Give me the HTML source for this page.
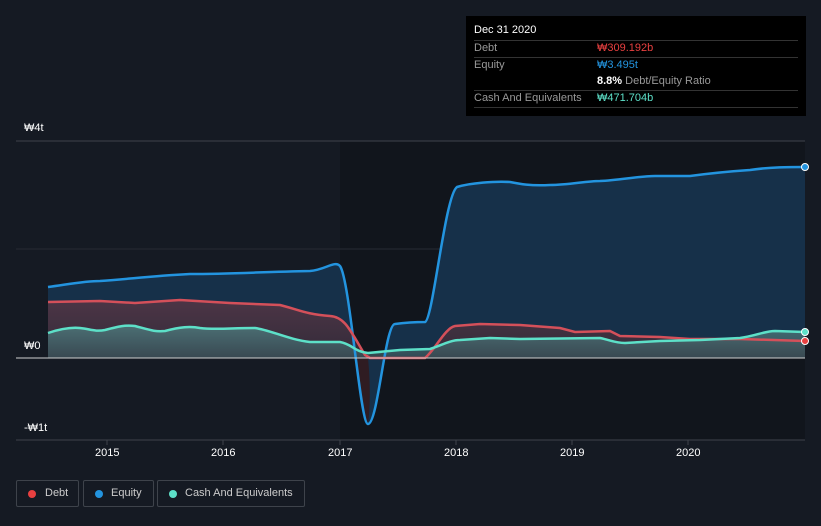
<!DOCTYPE html>
<html><head><style>
body{margin:0;width:821px;height:526px;background:#151a23;font-family:"Liberation Sans",sans-serif;overflow:hidden;position:relative}
.t{position:absolute;font-size:11px;color:#fff}
</style></head><body>
<svg width="821" height="526" style="position:absolute;left:0;top:0">
<defs>
<linearGradient id="gd" x1="0" y1="0" x2="0" y2="1"><stop offset="0" stop-color="#5a3645" stop-opacity=".8"/><stop offset="1" stop-color="#3a2a35" stop-opacity=".8"/></linearGradient>
<linearGradient id="gc" x1="0" y1="0" x2="0" y2="1"><stop offset="0" stop-color="#4e7e80" stop-opacity=".8"/><stop offset="1" stop-color="#3a5058" stop-opacity=".8"/></linearGradient>
</defs>
<rect x="340" y="141" width="465" height="299" fill="#11151c"/>
<line x1="16" y1="141" x2="805" y2="141" stroke="#3e434b"/>
<line x1="16" y1="249" x2="805" y2="249" stroke="#262b33"/>
<path d="M48,287 C70,284 85,281 100,281 C130,279 150,276 190,274 C230,274 260,272 310,271 C325,270 335,260 340,266 C350,280 360,424 368,424 C378,424 385,324 395,324 C410,322 420,322 425,322 C433,320 445,195 457,187 C470,183 495,181 510,182 C520,184 530,186 550,185 C570,185 585,181 600,181 C620,180 640,176 655,176 L690,176 C705,174 720,172 750,170 C770,167 790,167 805,167 L805,358 L48,358 Z" fill="#163049"/>
<path d="M48,302 L100,301 L135,303 L180,300 L230,303 L280,305 C300,310 305,314 330,316 C345,317 350,330 365,355 L370,358 L425,358 C435,350 445,328 455,326 L480,324 L520,325 L560,328 L575,332 L610,331 L620,336 L660,337 L690,339 L740,339 L805,341 L805,358 L48,358 Z" fill="url(#gd)"/>
<path d="M368,358 C372,400 368,424 368,424 C364,424 360,380 356,358 Z" fill="#2f1c22"/>
<path d="M48,333 C60,329 70,327 80,328 C90,329 95,332 105,330 C120,326 125,325 135,326 C150,330 155,332 165,331 C180,327 190,326 200,328 C215,330 230,328 255,328 C270,330 290,340 310,342 L340,342 C352,344 355,352 368,353 L400,350 L430,349 C440,346 450,340 460,340 L490,338 L520,339 L600,338 C610,340 615,343 625,343 L660,341 L700,340 L740,338 C755,336 765,331 775,331 L805,332 L805,358 L48,358 Z" fill="url(#gc)"/>
<path d="M48,287 C70,284 85,281 100,281 C130,279 150,276 190,274 C230,274 260,272 310,271 C325,270 335,260 340,266 C350,280 360,424 368,424 C378,424 385,324 395,324 C410,322 420,322 425,322 C433,320 445,195 457,187 C470,183 495,181 510,182 C520,184 530,186 550,185 C570,185 585,181 600,181 C620,180 640,176 655,176 L690,176 C705,174 720,172 750,170 C770,167 790,167 805,167" fill="none" stroke="#2394df" stroke-width="2.5"/>
<path d="M48,302 L100,301 L135,303 L180,300 L230,303 L280,305 C300,310 305,314 330,316 C345,317 350,330 365,355 L370,358 L425,358 C435,350 445,328 455,326 L480,324 L520,325 L560,328 L575,332 L610,331 L620,336 L660,337 L690,339 L740,339 L805,341" fill="none" stroke="#d4505a" stroke-width="2.5"/>
<path d="M48,333 C60,329 70,327 80,328 C90,329 95,332 105,330 C120,326 125,325 135,326 C150,330 155,332 165,331 C180,327 190,326 200,328 C215,330 230,328 255,328 C270,330 290,340 310,342 L340,342 C352,344 355,352 368,353 L400,350 L430,349 C440,346 450,340 460,340 L490,338 L520,339 L600,338 C610,340 615,343 625,343 L660,341 L700,340 L740,338 C755,336 765,331 775,331 L805,332" fill="none" stroke="#5de0c8" stroke-width="2.5"/>
<line x1="16" y1="358" x2="805" y2="358" stroke="#d0d0d0" stroke-width="1"/>
<line x1="16" y1="440" x2="805" y2="440" stroke="#3e434b"/>
<g stroke="#3e434b"><line x1="107" y1="440" x2="107" y2="445"/><line x1="223" y1="440" x2="223" y2="445"/><line x1="340" y1="440" x2="340" y2="445"/><line x1="456" y1="440" x2="456" y2="445"/><line x1="572" y1="440" x2="572" y2="445"/><line x1="688" y1="440" x2="688" y2="445"/></g>
<circle cx="805" cy="167" r="3.5" fill="#2394df" stroke="#fff"/>
<circle cx="805" cy="332" r="3.5" fill="#5de0c8" stroke="#fff"/>
<circle cx="805" cy="341" r="3.5" fill="#e84040" stroke="#fff"/>
</svg>
<div class="t" style="left:24px;top:122px">₩4t</div>
<div class="t" style="left:24px;top:340px">₩0</div>
<div class="t" style="left:24px;top:422px">-₩1t</div>
<div class="t" style="left:95px;top:447px">2015</div>
<div class="t" style="left:211px;top:447px">2016</div>
<div class="t" style="left:328px;top:447px">2017</div>
<div class="t" style="left:444px;top:447px">2018</div>
<div class="t" style="left:560px;top:447px">2019</div>
<div class="t" style="left:676px;top:447px">2020</div>
<div style="position:absolute;left:466px;top:16px;width:340px;height:100px;background:#000;font-size:11px;color:#999">
 <div style="position:absolute;left:8px;top:8px;color:#fff">Dec 31 2020</div>
 <div style="position:absolute;left:8px;right:8px;top:24px;border-top:1px solid #333"></div>
 <div style="position:absolute;left:8px;top:26px">Debt</div><div style="position:absolute;left:131px;top:26px;color:#e84040">₩309.192b</div>
 <div style="position:absolute;left:8px;right:8px;top:41px;border-top:1px solid #333"></div>
 <div style="position:absolute;left:8px;top:43px">Equity</div><div style="position:absolute;left:131px;top:43px;color:#2394df">₩3.495t</div>
 <div style="position:absolute;left:131px;top:59px"><b style="color:#fff">8.8%</b> Debt/Equity Ratio</div>
 <div style="position:absolute;left:8px;right:8px;top:74px;border-top:1px solid #333"></div>
 <div style="position:absolute;left:8px;top:76px">Cash And Equivalents</div><div style="position:absolute;left:131px;top:76px;color:#5de0c8">₩471.704b</div>
 <div style="position:absolute;left:8px;right:8px;top:91px;border-top:1px solid #333"></div>
</div>
<div style="position:absolute;left:16px;top:480px;width:61px;height:25px;border:1px solid #3e434b;border-radius:2px;font-size:11px;color:#ccc;line-height:25px"><span style="position:absolute;left:11px;top:9px;width:8px;height:8px;border-radius:50%;background:#e84040"></span><span style="position:absolute;left:28px">Debt</span></div>
<div style="position:absolute;left:83px;top:480px;width:69px;height:25px;border:1px solid #3e434b;border-radius:2px;font-size:11px;color:#ccc;line-height:25px"><span style="position:absolute;left:11px;top:9px;width:8px;height:8px;border-radius:50%;background:#2394df"></span><span style="position:absolute;left:27px">Equity</span></div>
<div style="position:absolute;left:157px;top:480px;width:146px;height:25px;border:1px solid #3e434b;border-radius:2px;font-size:11px;color:#ccc;line-height:25px"><span style="position:absolute;left:11px;top:9px;width:8px;height:8px;border-radius:50%;background:#5de0c8"></span><span style="position:absolute;left:27px">Cash And Equivalents</span></div>
</body></html>
